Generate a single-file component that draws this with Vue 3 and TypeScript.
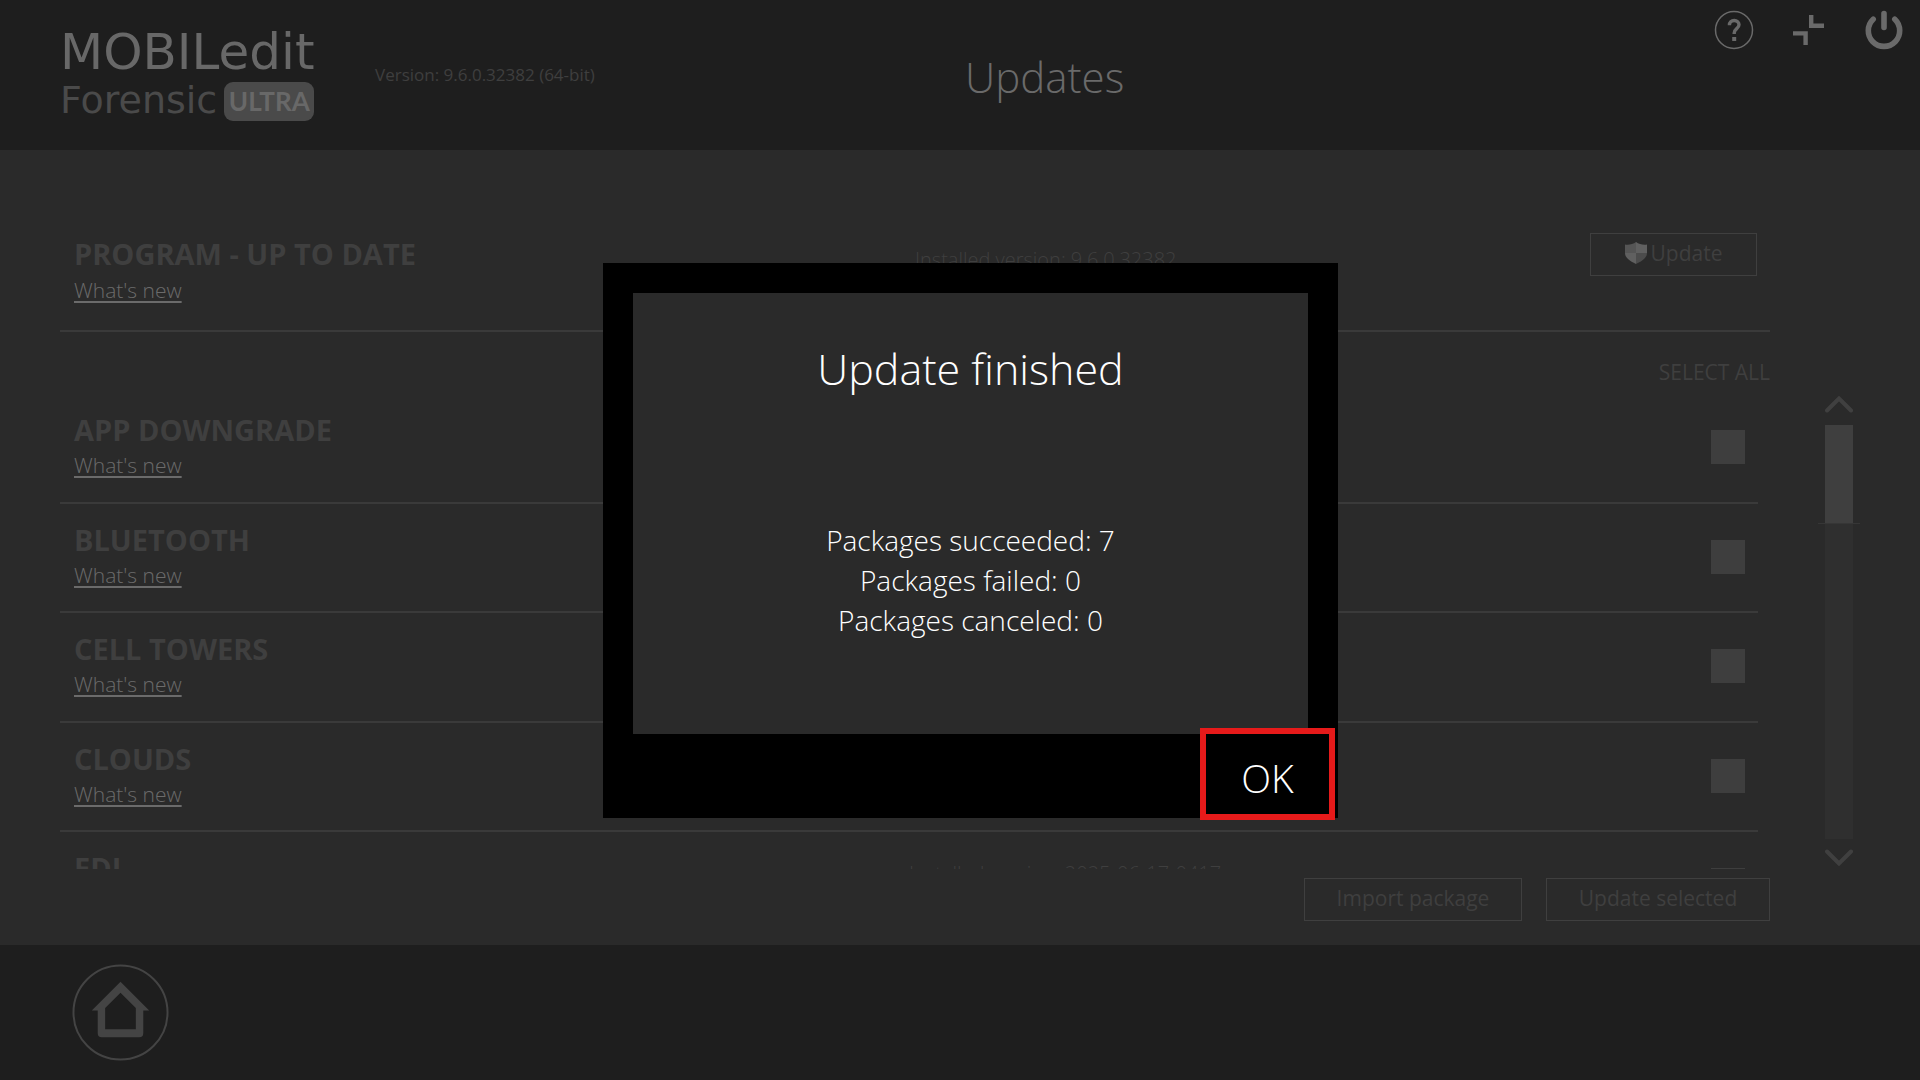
<script setup lang="ts">
import { ref } from 'vue'

interface Package {
  id: string
  name: string
  installed?: string
}

const packages: Package[] = [
  { id: 'app-downgrade', name: 'APP DOWNGRADE' },
  { id: 'bluetooth', name: 'BLUETOOTH' },
  { id: 'cell-towers', name: 'CELL TOWERS' },
  { id: 'clouds', name: 'CLOUDS' },
  { id: 'edi', name: 'EDI', installed: 'Installed version: 2025-06-17-0417' },
]

const selected = ref<string[]>([])

const results = [
  { label: 'Packages succeeded', count: 7 },
  { label: 'Packages failed', count: 0 },
  { label: 'Packages canceled', count: 0 },
]
</script>

<template>
  <div class="page">
    <header class="top">
      <div class="logo">
        <div class="logo-name">MOBILedit</div>
        <div class="logo-edition">
          <span>Forensic</span>
          <span class="logo-badge">ULTRA</span>
        </div>
      </div>
      <p class="version">Version: 9.6.0.32382 (64-bit)</p>
      <h1 class="title">Updates</h1>
      <nav class="tools">
        <button type="button" aria-label="Help">
          <svg width="40" height="40" viewBox="0 0 40 40" fill="none" stroke="#6a6a6a">
            <circle cx="20" cy="20" r="18.5" stroke-width="1.5" />
            <path d="M15.4 15.2c0-3 2-4.7 4.8-4.7s4.8 1.7 4.8 4.3c0 3.8-4.8 3.9-4.8 8.2v1" stroke-width="3.4" />
            <rect x="18.2" y="27" width="4" height="4" fill="#6a6a6a" stroke="none" />
          </svg>
        </button>
        <button type="button" aria-label="Exit full screen">
          <svg width="40" height="40" viewBox="0 0 40 40" fill="none" stroke="#6a6a6a" stroke-width="4.4">
            <path d="M22.2 5v10.800h12.800M4 23.400h12.600V35" />
          </svg>
        </button>
        <button type="button" aria-label="Quit">
          <svg width="40" height="40" viewBox="0 0 40 40" fill="none" stroke="#6a6a6a" stroke-width="5.600" stroke-linecap="round">
            <path d="M20 3.500v14M9.200 9.300a15.700 15.700 0 1 0 21.600 0" />
          </svg>
        </button>
      </nav>
    </header>

    <main class="content">
      <section class="program">
        <div class="info">
          <h2 class="name">PROGRAM - UP TO DATE</h2>
          <a class="news" href="#program">What's new</a>
        </div>
        <div class="program-side">
          <p class="installed">Installed version: 9.6.0.32382</p>
          <button type="button" class="box-button update">
            <svg width="22" height="22" viewBox="0 0 22 22">
              <path d="M0 2.600C4 3.200 8 2.200 11 0v11H0z" fill="#555" />
              <path d="M22 2.600C18 3.200 14 2.200 11 0v11h11z" fill="#606060" />
              <path d="M0 11h11v11C4 18.500 0 15.500 0 11z" fill="#606060" />
              <path d="M22 11H11v11c7-3.500 11-6.500 11-11z" fill="#4c4c4c" />
            </svg>
            <span>Update</span>
          </button>
        </div>
      </section>

      <button type="button" class="select-all">SELECT ALL</button>

      <div class="list-area">
        <ul class="list">
          <li v-for="item in packages" :key="item.id" class="row">
            <div class="info">
              <h2 class="name"><label :for="item.id">{{ item.name }}</label></h2>
              <a class="news" :href="'#' + item.id">What's new</a>
            </div>
            <div class="row-side">
              <p class="installed">{{ item.installed }}</p>
              <input :id="item.id" v-model="selected" type="checkbox" :value="item.id" />
            </div>
          </li>
        </ul>
        <div class="scroll">
          <button type="button" aria-label="Scroll up">
            <svg width="28" height="17" viewBox="0 0 28 17" fill="none" stroke="#404040" stroke-width="4" stroke-linecap="round">
              <path d="M2 14.500 14 2.500 26 14.500" />
            </svg>
          </button>
          <div class="track">
            <div class="thumb"></div>
            <div class="thumb-edge"></div>
          </div>
          <button type="button" aria-label="Scroll down">
            <svg width="28" height="17" viewBox="0 0 28 17" fill="none" stroke="#404040" stroke-width="4" stroke-linecap="round">
              <path d="M2 2.500 14 14.500 26 2.500" />
            </svg>
          </button>
        </div>
      </div>

      <div class="actions">
        <button type="button" class="box-button import">Import package</button>
        <button type="button" class="box-button selected">Update selected</button>
      </div>
    </main>

    <footer class="bottom">
      <button type="button" class="home" aria-label="Home">
        <svg width="97" height="97" viewBox="0 0 98 98" fill="none" stroke="#444">
          <circle cx="49" cy="49" r="47.500" stroke-width="2" />
          <path fill="#444" stroke="none" fill-rule="evenodd" d="M49 18 78 47H72V70a4 4 0 0 1-4 4H30a4 4 0 0 1-4-4V47H20zM49 29 33.500 44.500V66H64.500V44.500z" />
        </svg>
      </button>
    </footer>

    <div class="overlay">
      <section class="dialog" role="dialog" aria-labelledby="dialog-title">
        <div class="dialog-body">
          <h2 id="dialog-title">Update finished</h2>
          <p v-for="result in results" :key="result.label">{{ result.label }}: {{ result.count }}</p>
        </div>
        <div class="dialog-footer">
          <button type="button" class="ok">OK</button>
        </div>
      </section>
    </div>
  </div>
</template>

<style>
body {
  margin: 0;
  background: #2a2a2a;
}
</style>

<style scoped>
.page {
  position: relative;
  display: flex;
  flex-direction: column;
  height: 100vh;
  overflow: hidden;
  background: #2a2a2a;
  color: #3f3f3f;
  font-family: "Open Sans", "Noto Sans", sans-serif;
  font-weight: 300;
}

h1,
h2,
p,
ul {
  margin: 0;
  padding: 0;
  font-weight: inherit;
}

button {
  padding: 0;
  border: 0;
  background: none;
  color: inherit;
  font: inherit;
  cursor: pointer;
}

svg {
  display: block;
}

.top {
  display: flex;
  box-sizing: border-box;
  height: 150px;
  padding: 10px 16px 0 60px;
  background: #1e1e1e;
}

.logo {
  width: 315px;
  padding-top: 12px;
  color: #686868;
  font-family: "DejaVu Sans", sans-serif;
  font-weight: 400;
}

.logo-name {
  font-size: 50px;
  line-height: 60px;
}

.logo-edition {
  display: flex;
  align-items: flex-start;
  gap: 7px;
  color: #4a4a4a;
  font-size: 38px;
  line-height: 36px;
}

.logo-badge {
  width: 90px;
  border-radius: 9px;
  background: #4a4a4a;
  color: #686868;
  font-family: Lato, sans-serif;
  font-size: 26px;
  font-weight: 700;
  line-height: 39px;
  text-align: center;
}

.version {
  flex: 0 0 32%;
  padding-top: 53px;
  font-size: 17px;
  font-weight: 400;
  line-height: 24px;
}

.title {
  flex: 1;
  padding-top: 35px;
  color: #6a6a6a;
  font-size: 42px;
  line-height: 64px;
}

.tools {
  display: flex;
  align-items: flex-start;
  gap: 35px;
}

.content {
  display: flex;
  flex: 1;
  flex-direction: column;
  min-height: 0;
  padding: 0 60px;
}

.program {
  display: grid;
  grid-template-columns: 1fr 1fr;
  box-sizing: border-box;
  height: 182px;
  margin-right: 90px;
  padding-top: 82px;
  border-bottom: 2px solid #3a3a3a;
}

.info {
  padding-left: 14px;
}

.program .news {
  margin-top: 1px;
}

.program-side {
  display: flex;
  align-items: flex-start;
  justify-content: space-between;
  padding: 1px 13px 0 0;
}

.program-side .installed {
  padding-top: 13px;
}

.name {
  font-size: 29px;
  font-weight: 700;
  line-height: 43px;
}

.news {
  display: table;
  color: #6b6b6b;
  font-size: 21px;
  line-height: 28px;
  text-decoration: underline;
  text-underline-offset: 3px;
}

.installed {
  font-size: 20px;
  line-height: 28px;
}

.box-button {
  box-sizing: border-box;
  height: 43px;
  padding-bottom: 4px;
  border: 1px solid #3f3f3f;
  font-size: 21px;
  font-weight: 400;
}

.update {
  display: flex;
  align-items: center;
  justify-content: center;
  gap: 4px;
  width: 167px;
}

.select-all {
  align-self: flex-end;
  height: 62px;
  margin-right: 90px;
  padding-top: 18px;
  font-size: 21px;
  font-weight: 400;
}

.list-area {
  display: flex;
  flex: 1;
  gap: 60px;
  min-height: 0;
}

.list {
  flex: 1;
  overflow: hidden;
  list-style: none;
}

.row {
  display: grid;
  grid-template-columns: 1fr 1fr;
  box-sizing: border-box;
  height: 110px;
  padding-top: 14px;
  border-bottom: 2px solid #3a3a3a;
}

.row:nth-child(even) {
  height: 109px;
}

.row-side {
  display: flex;
  align-items: flex-start;
  justify-content: space-between;
  padding: 14px 13px 0 0;
}

.row-side input {
  width: 34px;
  height: 34px;
  margin: 8px 0 0;
  appearance: none;
  background: #3e3e3e;
}

.row-side input:checked {
  background: #6a6a6a;
}

.scroll {
  display: flex;
  flex-direction: column;
  align-items: center;
  width: 42px;
  padding: 2px 0 3px;
}

.track {
  display: flex;
  flex: 1;
  flex-direction: column;
  align-items: center;
  width: 28px;
  margin: 12px 0 10px;
  background: #2f2f2f;
}

.thumb {
  width: 28px;
  height: 98px;
  background: #3f3f3f;
}

.thumb-edge {
  width: 42px;
  height: 1px;
  background: #363636;
}

.actions {
  display: flex;
  justify-content: flex-end;
  gap: 24px;
  height: 67px;
  margin-right: 90px;
  padding-top: 9px;
}

.import {
  width: 218px;
}

.selected {
  width: 224px;
}

.bottom {
  box-sizing: border-box;
  height: 135px;
  padding: 19px 72px 0;
  background: #1e1e1e;
}

.overlay {
  position: absolute;
  inset: 0;
  display: flex;
  align-items: center;
  justify-content: center;
  padding-left: 21px;
}

.dialog {
  box-sizing: border-box;
  width: 735px;
  padding: 30px 0 4px;
  background: #000;
  color: #fff;
}

.dialog-body {
  box-sizing: border-box;
  height: 441px;
  margin: 0 30px;
  padding-top: 44px;
  background: #2a2a2a;
  font-size: 28px;
  line-height: 40px;
  text-align: center;
}

.dialog-body h2 {
  margin-bottom: 119px;
  font-size: 43px;
  line-height: 64px;
}

.dialog-footer {
  display: flex;
  justify-content: flex-end;
  padding-right: 9px;
}

.ok {
  width: 123px;
  height: 80px;
  padding-top: 8px;
  outline: 6px solid #e61a1a;
  font-size: 39px;
}
</style>
